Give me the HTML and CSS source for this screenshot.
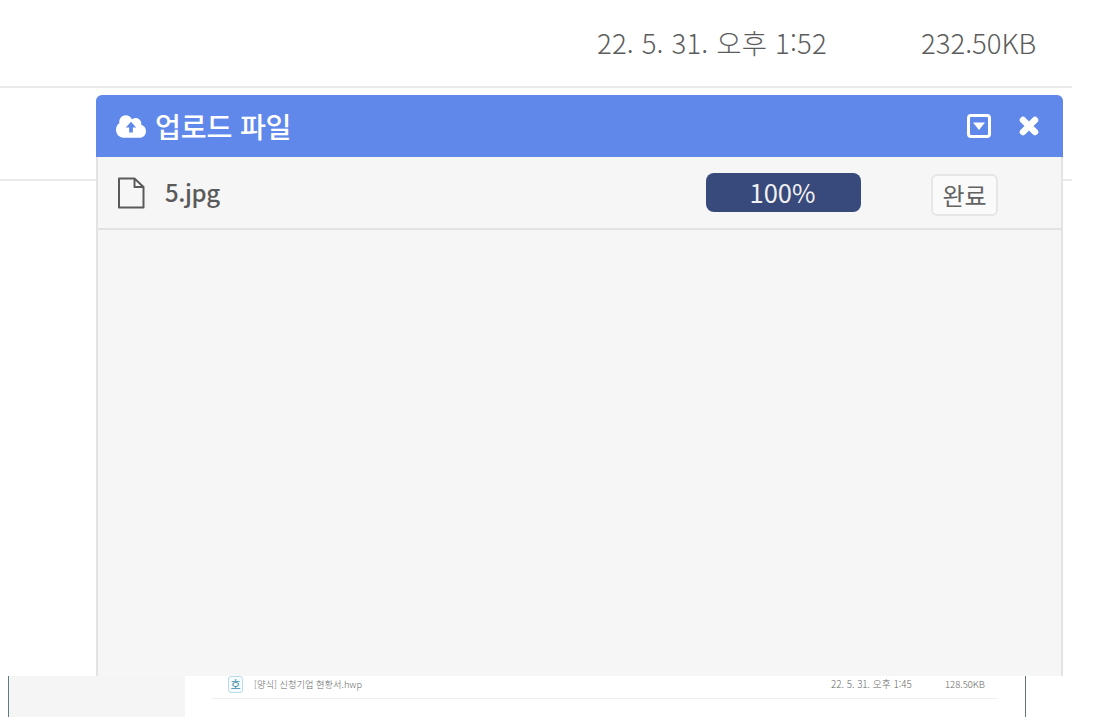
FILE: index.html
```html
<!DOCTYPE html>
<html lang="ko">
<head>
<meta charset="utf-8">
<title>업로드 파일</title>
<link rel="stylesheet" href="styles.css">
</head>
<body>
<main class="stage">
  <section class="bg-list">
    <div class="bg-row bg-row-first">
      <span class="bg-date">22. 5. 31. 오후 1:52</span>
      <span class="bg-size">232.50KB</span>
    </div>
    <div class="bg-row bg-row-second"></div>
  </section>
  <section class="panel">
    <header class="panel-head">
      <svg class="cloud" viewBox="0 0 32 24" aria-hidden="true">
        <path fill="#fff" d="M8 24h17c4 0 7-3 7-7 0-3.300-2.100-6-5.100-6.800.1-.5.100-.8.100-1.200 0-3.300-2.700-6-6-6-1.500 0-2.900.6-3.900 1.500C15.600 1.500 13 0 10.500 0 6.400 0 3.500 3.100 3.500 7c0 .6 0 1 .1 1.400C1.400 9.600 0 12.300 0 15.500 0 20.200 3.600 24 8 24z"/>
        <path fill="#6088ea" d="M16 7l5.500 6h-3.500v5.500h-4V13h-3.500z"/>
      </svg>
      <h1 class="panel-title">업로드 파일</h1>
      <div class="panel-actions">
        <svg class="act-min" viewBox="0 0 24 24" aria-hidden="true">
          <rect x="1.500" y="1.500" width="21" height="21" rx="2.500" fill="none" stroke="#fff" stroke-width="3"/>
          <path fill="#fff" d="M6 8.500h12l-6 7.500z"/>
        </svg>
        <svg class="act-close" viewBox="0 0 20 20" aria-hidden="true">
          <path fill="none" stroke="#fff" stroke-width="6.500" stroke-linecap="round" d="M4 4l12 12M16 4L4 16"/>
        </svg>
      </div>
    </header>
    <div class="file-row">
      <svg class="file-icon" viewBox="0 0 28 32" aria-hidden="true">
        <path fill="none" stroke="#5a5a5a" stroke-width="2" stroke-linejoin="round" d="M2 1.500h15.500L26.500 10v20.500H2zM17.500 1.500V10h9"/>
      </svg>
      <span class="file-name">5.jpg</span>
      <div class="progress">100%</div>
      <div class="done-cell"><button class="done" type="button">완료</button></div>
    </div>
    <div class="panel-body"></div>
  </section>
</main>
<section class="strip">
  <div class="strip-side"></div>
  <div class="strip-list">
    <div class="strip-row">
      <span class="hwp-icon">호</span>
      <span class="strip-name">[양식] 신청기업 현황서.hwp</span>
      <span class="strip-date">22. 5. 31. 오후 1:45</span>
      <span class="strip-size">128.50KB</span>
    </div>
  </div>
</section>
</body>
</html>
```

FILE: styles.css
```css
* { box-sizing: border-box; }
html, body { margin: 0; padding: 0; background: #fff; }
body {
  width: 1103px;
  height: 717px;
  overflow: hidden;
  font-family: "Noto Sans CJK KR", "Noto Sans", sans-serif;
  color: #555;
}
.stage { position: relative; height: 676px; overflow: hidden; }
.bg-list { width: 1072px; }
.bg-row { border-bottom: 2px solid #e9e9e9; }
.bg-row-first {
  height: 88px;
  display: flex;
  align-items: flex-start;
  padding-top: 22px;
  font-size: 27.500px;
  font-weight: 300;
  line-height: 40px;
  color: #5c5c5c;
}
.bg-date { margin-left: 597px; width: 324px; white-space: nowrap; letter-spacing: 0.170px; }
.bg-size { white-space: nowrap; }
.bg-row-second { height: 93px; }

.panel {
  position: absolute;
  left: 96px;
  top: 95px;
  width: 967px;
  height: 600px;
  background: #f6f6f6;
  border: 2px solid #e3e3e3;
  border-top: 0;
  border-radius: 6px 6px 0 0;
}
.panel-head {
  height: 62px;
  margin: 0 -2px;
  background: #6088ea;
  border-radius: 6px 6px 0 0;
  display: flex;
  align-items: center;
  padding: 0 24px 0 20px;
  color: #fff;
}
.cloud { width: 30px; height: 23px; margin-right: 9px; flex: none; }
.panel-title {
  margin: 0;
  font-size: 28.200px;
  font-weight: 500;
  line-height: 40px;
  letter-spacing: -0.2px;
}
.panel-actions { margin-left: auto; display: flex; align-items: center; gap: 27px; }
.act-min { width: 24px; height: 24px; margin-right: 1px; }
.act-close { width: 20px; height: 20px; }

.file-row {
  height: 73px;
  display: flex;
  align-items: center;
  padding-left: 19px;
  border-bottom: 2px solid #e2e2e2;
}
.file-icon { width: 28px; height: 32px; flex: none; }
.file-name {
  margin-left: 20px;
  width: 541px;
  font-size: 24px;
  font-weight: 500;
  letter-spacing: -0.4px;
  color: #5a5a5a;
  white-space: nowrap;
  line-height: 34px;
  padding-bottom: 2px;
}
.progress {
  width: 155px;
  height: 39px;
  background: #38497b;
  border-radius: 8px;
  color: #f1f1f1;
  font-size: 25.500px;
  line-height: 37px;
  padding-right: 2px;
  text-align: center;
}
.done-cell { margin-left: 70px; }
.done {
  display: block;
  width: 67px;
  height: 42px;
  margin-top: 5px;
  padding: 0;
  background: #fafafa;
  border: 2px solid #e6e6e6;
  border-radius: 6px;
  font-family: inherit;
  font-size: 24px;
  line-height: 36px;
  color: #636363;
}
.panel-body { height: 460px; }

.strip { height: 41px; display: flex; background: #fff; }
.strip-side {
  margin-left: 8px;
  width: 177px;
  background: #f5f5f5;
  border-left: 1px solid #5f7a80;
}
.strip-list {
  width: 841px;
  padding-left: 27px;
  border-right: 1px solid #66777c;
}
.strip-row {
  width: 786px;
  height: 23px;
  display: flex;
  align-items: center;
  padding: 0 0 6px 16px;
  border-bottom: 1px solid #efefef;
  font-size: 9.500px;
  color: #666;
  font-weight: 300;
}
.hwp-icon {
  width: 15px;
  height: 17px;
  border: 1px solid #b8dcea;
  border-radius: 3px;
  background: #f6fbfd;
  color: #3f8fa9;
  font-size: 11px;
  font-weight: 400;
  line-height: 15px;
  text-align: center;
  margin-right: 11px;
  flex: none;
}
.strip-name { width: 577px; white-space: nowrap; font-size: 9.250px; }
.strip-date { width: 114px; white-space: nowrap; font-size: 9.800px; }
.strip-size { white-space: nowrap; }
```
